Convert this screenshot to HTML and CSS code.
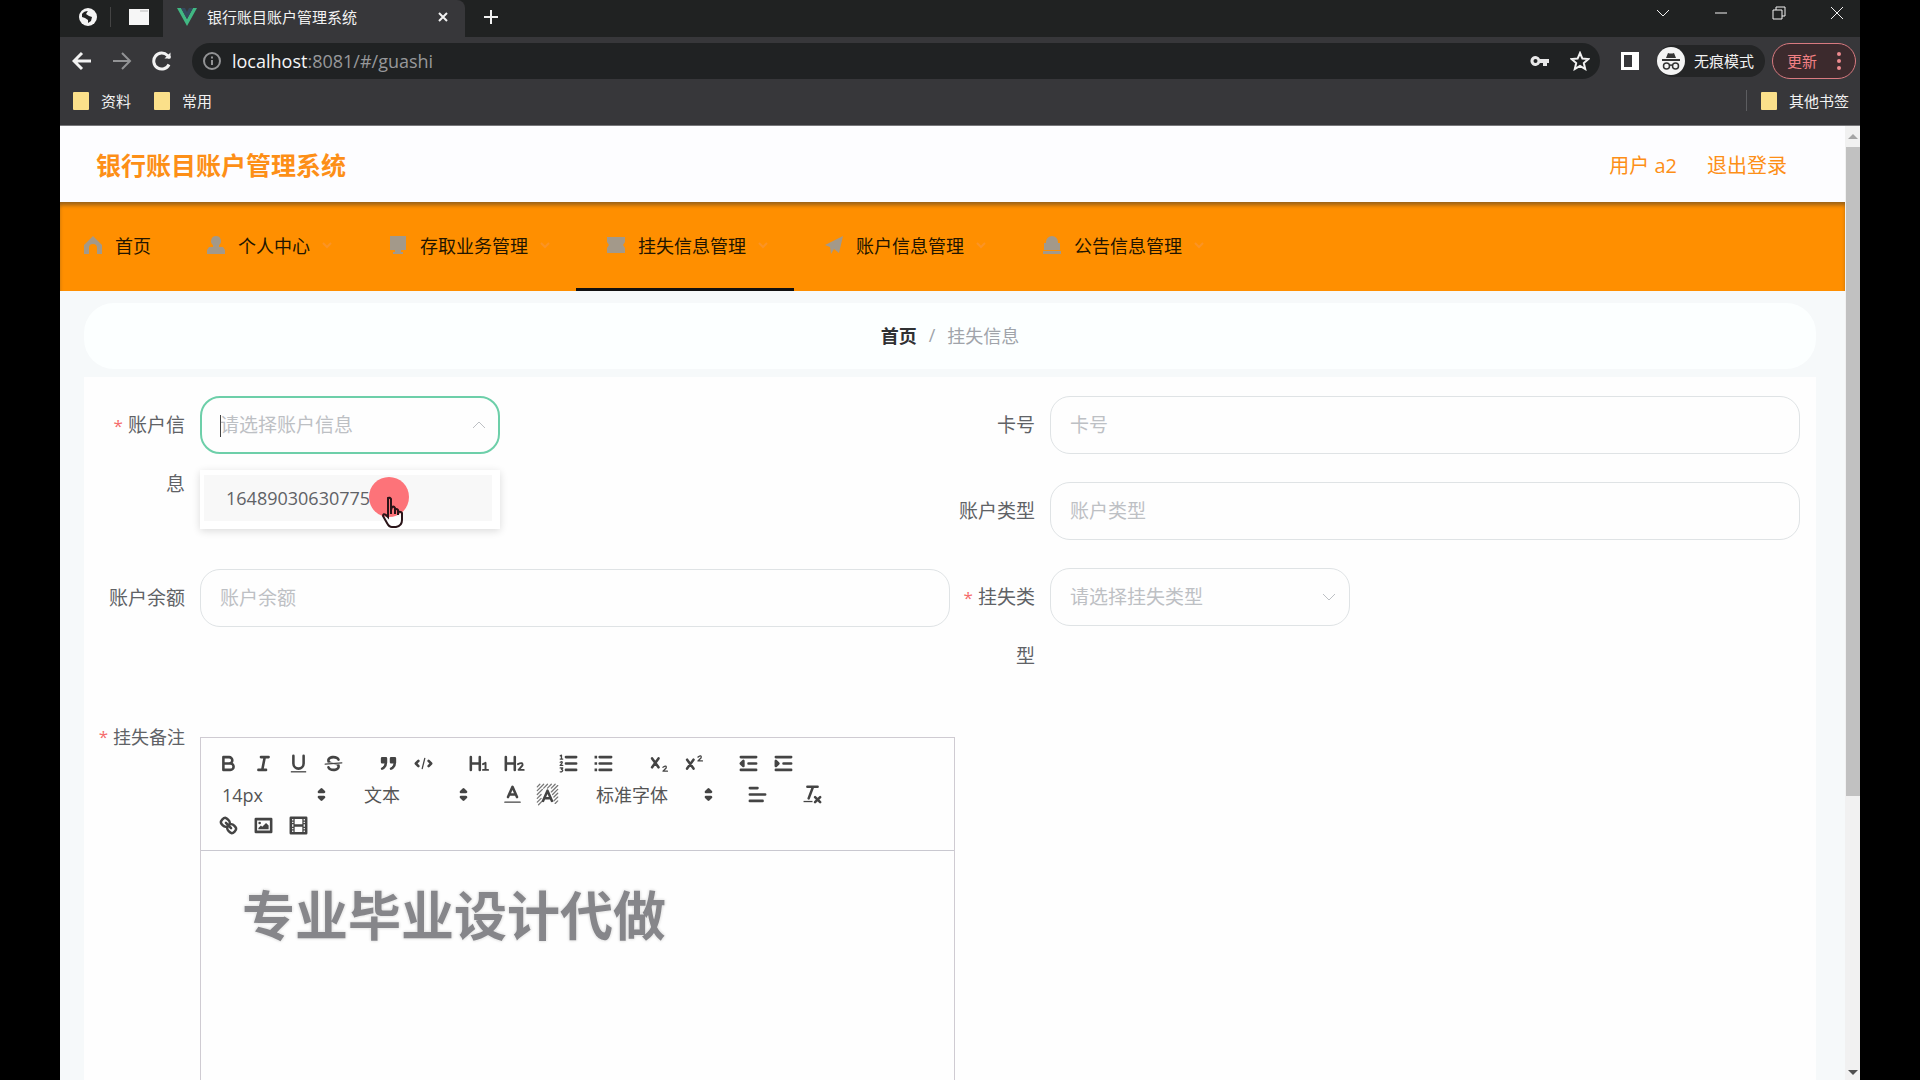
FILE: index.html
```html
<!DOCTYPE html>
<html lang="zh-CN">
<head>
<meta charset="utf-8">
<title>银行账目账户管理系统</title>
<link rel="stylesheet" href="styles.css">
</head>
<body>
<div class="window">
  <header class="chrome">
    <div class="tabs">
      <div class="pinned">
        <button class="icon-btn" aria-label="标签页"><svg width="20" height="20" viewBox="0 0 20 20"><circle cx="10" cy="10" r="9" fill="#f4f4f4"/><path d="M4 7q2-3 6-3l-2 3 3 2 3 1-1 4-3 2v-3l-3-2-3-1z" fill="#222"/><path d="M10 4l-1 3 5 1 1-3z" fill="#f4f4f4"/></svg></button>
        <button class="icon-btn" aria-label="标签页"><svg width="22" height="18" viewBox="0 0 22 18"><path d="M1 1h20v16H1z" fill="#f6f6f6"/><path d="M12 3h8" stroke="#bbb"/></svg></button>
      </div>
      <div class="tab">
        <svg width="20" height="18" viewBox="0 0 20 18"><path d="M0 0h4l6 11 6-11h4L10 18z" fill="#41b883"/><path d="M4 0h4l2 4 2-4h4l-6 11z" fill="#35495e"/></svg>
        <span class="tab-title">银行账目账户管理系统</span>
        <button class="icon-btn close" aria-label="关闭标签"><svg width="12" height="12" viewBox="0 0 12 12" class="line"><path d="M2 2l8 8M10 2l-8 8"/></svg></button>
      </div>
      <button class="icon-btn plus" aria-label="新标签"><svg width="16" height="16" viewBox="0 0 16 16" class="line"><path d="M8 1v14M1 8h14"/></svg></button>
      <div class="win-controls">
        <button class="icon-btn" aria-label="搜索标签"><svg width="14" height="14" viewBox="0 0 14 14" class="line thin"><path d="M1 4l6 6 6-6"/></svg></button>
        <button class="icon-btn" aria-label="最小化"><svg width="14" height="14" viewBox="0 0 14 14" class="line thin"><path d="M1 7h12"/></svg></button>
        <button class="icon-btn" aria-label="还原"><svg width="14" height="14" viewBox="0 0 14 14" class="line thin"><path d="M1 4h9v9H1zM4 4V1h9v9h-3"/></svg></button>
        <button class="icon-btn" aria-label="关闭"><svg width="14" height="14" viewBox="0 0 14 14" class="line thin"><path d="M1 1l12 12M13 1L1 13"/></svg></button>
      </div>
    </div>
    <div class="toolbar">
      <button class="icon-btn" aria-label="后退"><svg width="20" height="20" viewBox="0 0 20 20" class="line bold"><path d="M19 10H2M10 2l-8 8 8 8"/></svg></button>
      <button class="icon-btn" aria-label="前进"><svg width="20" height="20" viewBox="0 0 20 20" class="line dim"><path d="M1 10h17M10 2l8 8-8 8"/></svg></button>
      <button class="icon-btn" aria-label="刷新"><svg width="20" height="20" viewBox="0 0 20 20" class="line bold"><path d="M17 13.500A8 8 0 1 1 15.500 4.500L18 7"/><path d="M18.500 1.500v6h-6z" fill="#f2f2f2" stroke="none"/></svg></button>
      <div class="address">
        <svg width="18" height="18" viewBox="0 0 18 18" class="line dim"><circle cx="9" cy="9" r="8"/><path d="M9 8v5M9 4.500v2"/></svg>
        <span class="url"><b>localhost</b>:8081/#/guashi</span>
        <svg width="20" height="12" viewBox="0 0 20 12"><path d="M10 4h9v4h-2v3h-4V8h-3a5 5 0 1 1 0-4zM5.500 4a2 2 0 1 0 0 4 2 2 0 0 0 0-4z" fill="#e8e8e8" fill-rule="evenodd"/></svg>
        <svg width="20" height="20" viewBox="0 0 20 20" class="line star"><path d="M10 2l2.400 5.600 6 .500-4.600 4 1.400 5.900-5.200-3.200L4.800 18l1.400-5.900-4.600-4 6-.500z"/></svg>
      </div>
      <button class="icon-btn panel-btn" aria-label="侧边栏"><svg width="18" height="18" viewBox="0 0 18 18"><path d="M0 0h18v18H0zM3 3v12h8V3z" fill="#fff" fill-rule="evenodd"/></svg></button>
      <button class="incognito"><svg width="28" height="28" viewBox="0 0 28 28"><circle cx="14" cy="14" r="14" fill="#f4f4f4"/><path d="M9 11l2-5q3 1 6 0l2 5zM5 12h18v2H5z" fill="#333"/><g fill="none" stroke="#333" stroke-width="1.500"><circle cx="9.500" cy="19" r="3"/><circle cx="18.500" cy="19" r="3"/><path d="M12.500 18.500q1.500-1 3 0"/></g></svg>无痕模式</button>
      <button class="update">更新<svg width="4" height="18" viewBox="0 0 4 18" fill="#ee8a8e"><circle cx="2" cy="2" r="2"/><circle cx="2" cy="9" r="2"/><circle cx="2" cy="16" r="2"/></svg></button>
    </div>
    <nav class="bookmarks" aria-label="书签">
      <a href="#"><span class="folder"></span>资料</a>
      <a href="#"><span class="folder"></span>常用</a>
      <a href="#" class="other"><span class="folder"></span>其他书签</a>
    </nav>
  </header>

  <div class="viewport">
    <div class="app">
      <header class="site-header">
        <h1>银行账目账户管理系统</h1>
        <a href="#">用户 a2</a>
        <a href="#">退出登录</a>
      </header>
      <nav class="menu" aria-label="主菜单">
        <a href="#"><svg class="m-icon" viewBox="0 0 20 20"><path d="M10 1l9 9v9h-5v-6a4 4 0 0 0-8 0v6H1v-9z"/></svg>首页</a>
        <a href="#"><svg class="m-icon" viewBox="0 0 20 20"><path d="M10 1a5 5 0 0 1 3 9v2h4l2 3v4H1v-4l2-3h4v-2a5 5 0 0 1 3-9z"/></svg>个人中心<svg class="caret" viewBox="0 0 12 12"><path d="M2 4l4 4 4-4"/></svg></a>
        <a href="#"><svg class="m-icon" viewBox="0 0 20 20"><path d="M2 1h16v14h-5v2h2v2H5v-2h2v-2H2z"/></svg>存取业务管理<svg class="caret" viewBox="0 0 12 12"><path d="M2 4l4 4 4-4"/></svg></a>
        <a href="#" class="active"><svg class="m-icon" viewBox="0 0 20 20"><path d="M1 2h18v5l-2 3 2 3v5H1v-5l2-3-2-3z"/></svg>挂失信息管理<svg class="caret" viewBox="0 0 12 12"><path d="M2 4l4 4 4-4"/></svg></a>
        <a href="#"><svg class="m-icon" viewBox="0 0 20 20"><path d="M19 1l-4 17-5-4-3 5-1-7-5-2z"/></svg>账户信息管理<svg class="caret" viewBox="0 0 12 12"><path d="M2 4l4 4 4-4"/></svg></a>
        <a href="#"><svg class="m-icon" viewBox="0 0 20 20"><path d="M10 1a6 6 0 0 1 6 6v1h2v7H2V8h2V7a6 6 0 0 1 6-6zM1 16h18v3H1z"/></svg>公告信息管理<svg class="caret" viewBox="0 0 12 12"><path d="M2 4l4 4 4-4"/></svg></a>
      </nav>
      <main>
        <nav class="breadcrumb" aria-label="面包屑"><a href="#">首页</a><span class="sep">/</span><span>挂失信息</span></nav>
        <form class="panel">
          <div class="columns">
            <div class="column">
              <div class="field">
                <label class="required" for="account">账户信息</label>
                <div class="picker open">
                  <select id="account"><option>请选择账户信息</option></select>
                  <svg class="chevron" viewBox="0 0 14 14"><path d="M1 10l6-6 6 6"/></svg>
                  <span class="text-cursor"></span>
                  <ul class="options"><li>16489030630775</li></ul>
                  <span class="click-dot"></span>
                  <svg class="pointer" width="24" height="34" viewBox="0 0 24 34"><path d="M8 21h12v5l-4 5h-5l-4-5z" fill="#fff" fill-opacity=".700"/><path d="M7 2q2-1 3 1v11l1-3q2-1 3 1v2q2-2 3 0v2q3-1 4 1v7q0 6-6 7h-4q-3 0-5-4l-4-7q0-3 3-1l2 2z" fill="none" stroke="#2a1418" stroke-width="2"/><path d="M10 12v6M14 13v5M17 15v4" stroke="#2a1418" stroke-width="2"/></svg>
                </div>
              </div>
              <div class="field">
                <label for="balance">账户余额</label>
                <input id="balance" type="text" placeholder="账户余额">
              </div>
            </div>
            <div class="column">
              <div class="field">
                <label for="card">卡号</label>
                <input id="card" type="text" placeholder="卡号">
              </div>
              <div class="field">
                <label for="kind">账户类型</label>
                <input id="kind" type="text" placeholder="账户类型">
              </div>
              <div class="field">
                <label class="required" for="loss">挂失类型</label>
                <div class="picker">
                  <select id="loss"><option>请选择挂失类型</option></select>
                  <svg class="chevron" viewBox="0 0 14 14"><path d="M1 4l6 6 6-6"/></svg>
                </div>
              </div>
            </div>
          </div>
          <div class="field note">
            <span class="label required" id="note-label">挂失备注</span>
            <div class="editor">
              <div class="tools">
                <div class="group">
                  <button type="button" aria-label="粗体"><svg viewBox="0 0 18 18"><path d="M5 4h4.500a2.500 2.500 0 0 1 0 5H5zM5 9h5.500a2.500 2.500 0 0 1 0 5H5z"/></svg></button>
                  <button type="button" aria-label="斜体"><svg viewBox="0 0 18 18"><path d="M7 4h6M5 14h6M8 14l2-10"/></svg></button>
                  <button type="button" aria-label="下划线"><svg viewBox="0 0 18 18"><path d="M5 3v6a4 4 0 0 0 8 0V3"/><rect class="f" x="3" y="15" width="12" height="1"/></svg></button>
                  <button type="button" aria-label="删除线"><svg viewBox="0 0 18 18"><path class="t" d="M15.500 8.500l-13 1"/><path class="f" d="M9.007 8C6.542 7.791 6 7.519 6 6.500 6 5.792 7.283 5 9 5c1.571 0 2.765.679 2.969 1.309a1 1 0 0 0 1.900-.617C13.356 4.106 11.354 3 9 3 6.200 3 4 4.538 4 6.500a3.200 3.200 0 0 0 .500 1.843zM8.984 10C11.457 10.208 12 10.479 12 11.500c0 .708-1.283 1.500-3 1.500-1.571 0-2.765-.679-2.969-1.309a1 1 0 1 0-1.900.617C4.644 13.894 6.646 15 9 15c2.800 0 5-1.538 5-3.500a3.200 3.200 0 0 0-.500-1.843z"/></svg></button>
                </div>
                <div class="group">
                  <button type="button" aria-label="引用"><svg viewBox="0 0 18 18"><path class="fs" d="M4 5h3v3H4zM11 5h3v3h-3zM7 8c0 4-3 5-3 5M14 8c0 4-3 5-3 5"/></svg></button>
                  <button type="button" aria-label="代码"><svg viewBox="0 0 18 18"><path d="M5 7L3 9l2 2M13 7l2 2-2 2"/><path class="t" d="M10 5L8 13"/></svg></button>
                </div>
                <div class="group">
                  <button type="button" aria-label="标题一"><svg viewBox="0 0 18 18"><path d="M3 4v10M10 4v10M3 9h7"/><path d="M12.500 9.500l2-1V14M12.500 14h4" stroke-width="1.500"/></svg></button>
                  <button type="button" aria-label="标题二"><svg viewBox="0 0 18 18"><path d="M3 4v10M10 4v10M3 9h7"/><path d="M12.500 9.500q4-2 3.500 1L13 14h4" stroke-width="1.500"/></svg></button>
                </div>
                <div class="group">
                  <button type="button" aria-label="有序列表"><svg viewBox="0 0 18 18"><path d="M7 4h8M7 9h8M7 14h8"/><path class="t" d="M2.500 3l1-.500v3M2.500 5.500h2M2.500 8q2-1 1.500.500l-1.500 2h2M2.500 12.500h2l-1 1q2 1 0 2h-1"/></svg></button>
                  <button type="button" aria-label="无序列表"><svg viewBox="0 0 18 18"><path d="M6 4h9M6 9h9M6 14h9"/><path class="f" d="M2 3h2v2H2zM2 8h2v2H2zM2 13h2v2H2z"/></svg></button>
                </div>
                <div class="group">
                  <button type="button" aria-label="下标"><svg viewBox="0 0 18 18"><path d="M4 5l5 7M9 5l-5 7"/><path class="t" d="M12.500 12q3-2 2.500.500L12.500 15H16"/></svg></button>
                  <button type="button" aria-label="上标"><svg viewBox="0 0 18 18"><path d="M4 6l5 7M9 6l-5 7"/><path class="t" d="M12.500 4q3-2 2.500.500L12.500 7H16"/></svg></button>
                </div>
                <div class="group">
                  <button type="button" aria-label="减少缩进"><svg viewBox="0 0 18 18"><path d="M3 4h12M3 14h12M9 9h6"/><path class="fs" d="M5 7v4L3 9z"/></svg></button>
                  <button type="button" aria-label="增加缩进"><svg viewBox="0 0 18 18"><path d="M3 4h12M3 14h12M9 9h6"/><path class="fs" d="M3 7v4l2-2z"/></svg></button>
                </div>
                <div class="group choice">
                  <select aria-label="字号"><option>14px</option></select>
                  <svg viewBox="0 0 18 18"><path class="fs" d="M7 11l2 2 2-2zM7 7l2-2 2 2z"/></svg>
                </div>
                <div class="group choice">
                  <select aria-label="段落"><option>文本</option></select>
                  <svg viewBox="0 0 18 18"><path class="fs" d="M7 11l2 2 2-2zM7 7l2-2 2 2z"/></svg>
                </div>
                <div class="group">
                  <button type="button" aria-label="文字颜色"><svg viewBox="0 0 18 18"><path d="M5.500 11L9 3l3.500 8M6.400 9h5.200"/><path class="t" d="M3 15h12"/></svg></button>
                  <button type="button" aria-label="背景颜色"><svg viewBox="0 0 18 18"><path class="hatch" d="M1 3l2-2M1 6l5-5M1 9l4-4M1 12l3-3M1 15l3-3M2 17l3-3M6 4l3-3M9 4l3-3M12 4l3-3M12 7l5-5M13 9l4-4M14 11l3-3M14 14l3-3M15 16l2-2"/><path d="M5.500 14L9 6l3.500 8M6.400 12h5.200"/></svg></button>
                </div>
                <div class="group choice wide">
                  <select aria-label="字体"><option>标准字体</option></select>
                  <svg viewBox="0 0 18 18"><path class="fs" d="M7 11l2 2 2-2zM7 7l2-2 2 2z"/></svg>
                </div>
                <div class="group"><button type="button" aria-label="对齐"><svg viewBox="0 0 18 18"><path d="M3 9h12M3 14h10M3 4h6"/></svg></button></div>
                <div class="group"><button type="button" aria-label="清除格式"><svg viewBox="0 0 18 18"><path d="M5 3h8M6 12l3.400-9M11 11l4 4M15 11l-4 4"/><rect class="f" x="2" y="14" width="7" height="1"/></svg></button></div>
                <div class="group">
                  <button type="button" aria-label="链接"><svg viewBox="0 0 18 18"><path d="M7 7l4 4M8.900 4.577a3.476 3.476 0 0 1 .360 4.679A3.476 3.476 0 0 1 4.577 8.900C3.185 7.500 2.035 6.400 4.217 4.217S7.500 3.185 8.900 4.577zM13.423 9.100a3.476 3.476 0 0 0-4.679-.360 3.476 3.476 0 0 0 .360 4.679c1.392 1.392 2.500 2.542 4.679.360S14.815 10.500 13.423 9.100z"/></svg></button>
                  <button type="button" aria-label="图片"><svg viewBox="0 0 18 18"><path d="M3 4h12v10H3z"/><circle class="f" cx="6" cy="7" r="1"/><path class="f" d="M5 12v-1l2-2 1 1 3-3 2 2v3z"/></svg></button>
                  <button type="button" aria-label="视频"><svg viewBox="0 0 18 18"><path d="M3 3h12v12H3z"/><path class="f" d="M5 3h1v12H5zM12 3h1v12h-1zM5 8h8v2H5zM3 5h3v1H3zM3 7h3v1H3zM3 10h3v1H3zM3 12h3v1H3zM12 5h3v1h-3zM12 7h3v1h-3zM12 10h3v1h-3zM12 12h3v1h-3z"/></svg></button>
                </div>
              </div>
              <div class="editor-body" aria-labelledby="note-label"><p class="watermark">专业毕业设计代做</p></div>
            </div>
          </div>
        </form>
      </main>
    </div>
    <div class="scrollbar"><span class="arrow up"></span><span class="thumb"></span><span class="arrow down"></span></div>
  </div>
</div>
</body>
</html>
```
FILE: styles.css
```css
* { box-sizing: border-box; }
body {
  margin: 0;
  padding: 0 60px;
  background: #000;
  font-family: "Open Sans", "Noto Sans CJK SC", sans-serif;
  color: #606266;
}
a { color: inherit; text-decoration: none; }
button { font: inherit; color: inherit; background: none; border: 0; padding: 0; }
svg { display: block; flex: none; }
.window { display: flex; flex-direction: column; height: 100vh; overflow: hidden; }

/* browser frame */
.chrome { flex: none; background: #37373a; color: #f2f2f2; font-size: 15px; border-bottom: 1px solid #77777a; }
.icon-btn { display: grid; place-items: center; flex: none; }
.line { fill: none; stroke: #f2f2f2; stroke-width: 2; }
.line.bold { stroke-width: 3; }
.line.thin { stroke-width: 1; }
.line.dim { stroke: #929395; }
.tabs { display: flex; align-items: center; height: 37px; padding-bottom: 4px; background: #202222; }
.pinned { display: flex; }
.pinned .icon-btn { width: 50px; height: 20px; padding-left: 6px; }
.pinned .icon-btn + .icon-btn { border-left: 1px solid #444; }
.tab { display: flex; align-items: center; gap: 10px; width: 302px; height: 37px; margin: 0 0 -4px 3px; padding: 0 16px 4px 14px; background: #37373a; border-radius: 0 8px 0 0; }
.tab-title { flex: 1; }
.plus { width: 52px; }
.win-controls { display: flex; margin: 0 -6px 8px auto; }
.win-controls .icon-btn { width: 58px; height: 20px; }
.toolbar { display: flex; align-items: center; height: 47px; padding: 0 4px 0 12px; }
.toolbar > .icon-btn { margin-right: 20px; }
.address { display: flex; flex: 1; align-items: center; gap: 20px; height: 36px; padding: 0 10px 0 11px; border-radius: 18px; background: #202223; }
.url { flex: 1; margin-left: -9px; font-size: 18px; color: #97989a; }
.url b { font-weight: 400; color: #f6f6f6; }
.toolbar > .panel-btn { margin: 0 18px 0 21px; }
.incognito { display: flex; align-items: center; gap: 9px; width: 108px; height: 32px; border-radius: 16px; background: #242526; margin-right: 7px; }
.update { display: flex; align-items: center; justify-content: space-between; width: 84px; height: 36px; padding: 0 14px; border: 1px solid #d87a80; border-radius: 18px; background: #3c2a2d; color: #f08084; }
.bookmarks { display: flex; align-items: center; gap: 23px; height: 41px; padding: 0 11px 8px 13px; }
.bookmarks a { display: flex; align-items: center; gap: 12px; }
.folder { width: 16px; height: 18px; background: #fbe08a; border-radius: 1px; }
.bookmarks .other { margin-left: auto; padding-left: 14px; border-left: 1px solid #5c5d60; }

/* page */
.viewport { display: flex; flex: 1; min-height: 0; background: #f6f9fa; }
.app { flex: 1; min-width: 0; overflow: hidden; }
.site-header { display: flex; align-items: center; gap: 30px; height: 76px; padding: 0 58px 0 36px; background: #fdfdff; color: #fd8f17; font-size: 20px; }
.site-header h1 { flex: 1; margin: 0; font-size: 25px; }
.menu { display: flex; height: 89px; padding-left: 1px; background: #ff8f00; color: #221500; font-size: 18px; box-shadow: inset 0 4px 4px -1px #96601a; }
.menu a { display: flex; align-items: center; padding: 0 25px; border-bottom: 3px solid transparent; }
.menu a:first-child { padding-left: 17px; }
.menu .active { border-color: #111; }
.m-icon { width: 20px; height: 20px; margin: 0 12px 0 5px; fill: #a3998a; }
.caret { width: 12px; height: 12px; margin-left: 11px; fill: none; stroke: #fb9425; stroke-width: 2; }
main { padding: 12px 29px 0 24px; }
.breadcrumb { display: flex; align-items: center; justify-content: center; height: 66px; padding-bottom: 2px; border-radius: 30px; background: #fcffff; font-size: 18px; color: #a0a4aa; }
.breadcrumb a { font-weight: 700; color: #303133; }
.sep { margin: 0 12px; }
.panel { margin-top: 8px; padding: 19px 16px 0; background: #fefefe; font-size: 19px; min-height: 900px; }
.columns { display: grid; grid-template-columns: 1fr 1fr; }
.column { display: flex; flex-direction: column; gap: 28px; }
.field { display: flex; align-items: flex-start; }
.column:first-child .field:first-child { margin-bottom: 28px; }
label, .label { flex: none; width: 100px; padding-right: 15px; text-align: right; line-height: 58px; }
.required::before { content: "*"; margin-right: 5px; color: #f56c6c; font-size: 17px; }
input { flex: 1; min-width: 0; }
input, .picker select { height: 58px; padding: 0 19px; border: 1px solid #dfe3e5; border-radius: 20px; background: #fefefe; font: inherit; color: #606266; outline: 0; }
input::placeholder { color: #bdc0c4; opacity: 1; }
.picker { position: relative; width: 300px; margin-bottom: -28px; }
.picker select { width: 100%; appearance: none; color: #bdc0c4; }
.picker.open select { border: 2px solid #6dcfa9; padding: 0 18px; }
.chevron { position: absolute; right: 14px; top: 22px; width: 14px; height: 14px; fill: none; stroke: #bdc0c4; }
.text-cursor { position: absolute; left: 20px; top: 19px; width: 1px; height: 22px; background: #444; }
.options { position: absolute; left: 0; right: 0; top: 74px; z-index: 2; margin: 0; padding: 5px 8px 8px 4px; list-style: none; background: #fff; box-shadow: 0 2px 8px rgba(0, 0, 0, .14); font-size: 18px; }
.options li { padding-left: 22px; line-height: 46px; background: #f8f8f8; }
.click-dot { position: absolute; left: 169px; top: 81px; z-index: 3; width: 40px; height: 40px; border-radius: 50%; background: #fd7379; }
.pointer { position: absolute; left: 181px; top: 100px; z-index: 4; }
.note { margin-top: 23px; }
.label { white-space: nowrap; font-size: 18px; }
.label.required { display: flex; justify-content: flex-end; }

/* rich text editor */
.editor { width: 755px; margin-top: 29px; border: 1px solid #cfcbd2; }
.tools { display: flex; flex-wrap: wrap; padding: 10px 9px 9px 10px; border-bottom: 1px solid #c9c8d0; }
.group { display: flex; margin-right: 20px; }
.tools button { display: grid; place-items: center; width: 35px; height: 31px; }
.tools svg { width: 23px; height: 23px; fill: none; stroke: #444; stroke-width: 2; stroke-linejoin: round; stroke-linecap: round; }
.tools .f { fill: #444; stroke: none; }
.tools .fs { fill: #444; }
.tools .t { stroke-width: 1; }
.tools .hatch { stroke-width: 1; stroke: #777; }
.choice { position: relative; width: 122px; height: 31px; align-items: center; }
.choice.wide { width: 135px; }
.choice select { width: 100%; height: 31px; padding: 0 11px; appearance: none; border: 0; background: none; font: inherit; font-size: 18px; color: #555; }
.choice svg { position: absolute; right: 0; top: 4px; }
.editor-body { min-height: 300px; padding: 26px 41px; }
.watermark { margin: 0; font-size: 53px; line-height: 78px; font-weight: 700; color: #86868a; text-shadow: 0 0 2px #fff, 0 0 3px #bbb; }

/* scrollbar */
.scrollbar { display: flex; flex-direction: column; align-items: stretch; width: 15px; background: #f1f1f1; }
.arrow { flex: none; align-self: center; border: 5px solid transparent; }
.up { margin: 3px 0 8px; border-bottom-color: #a5a5a5; }
.down { margin: auto 0 0; border-top-color: #505050; }
.thumb { flex: 0 0 68%; margin-left: 1px; background: #c1c1c1; }
```
